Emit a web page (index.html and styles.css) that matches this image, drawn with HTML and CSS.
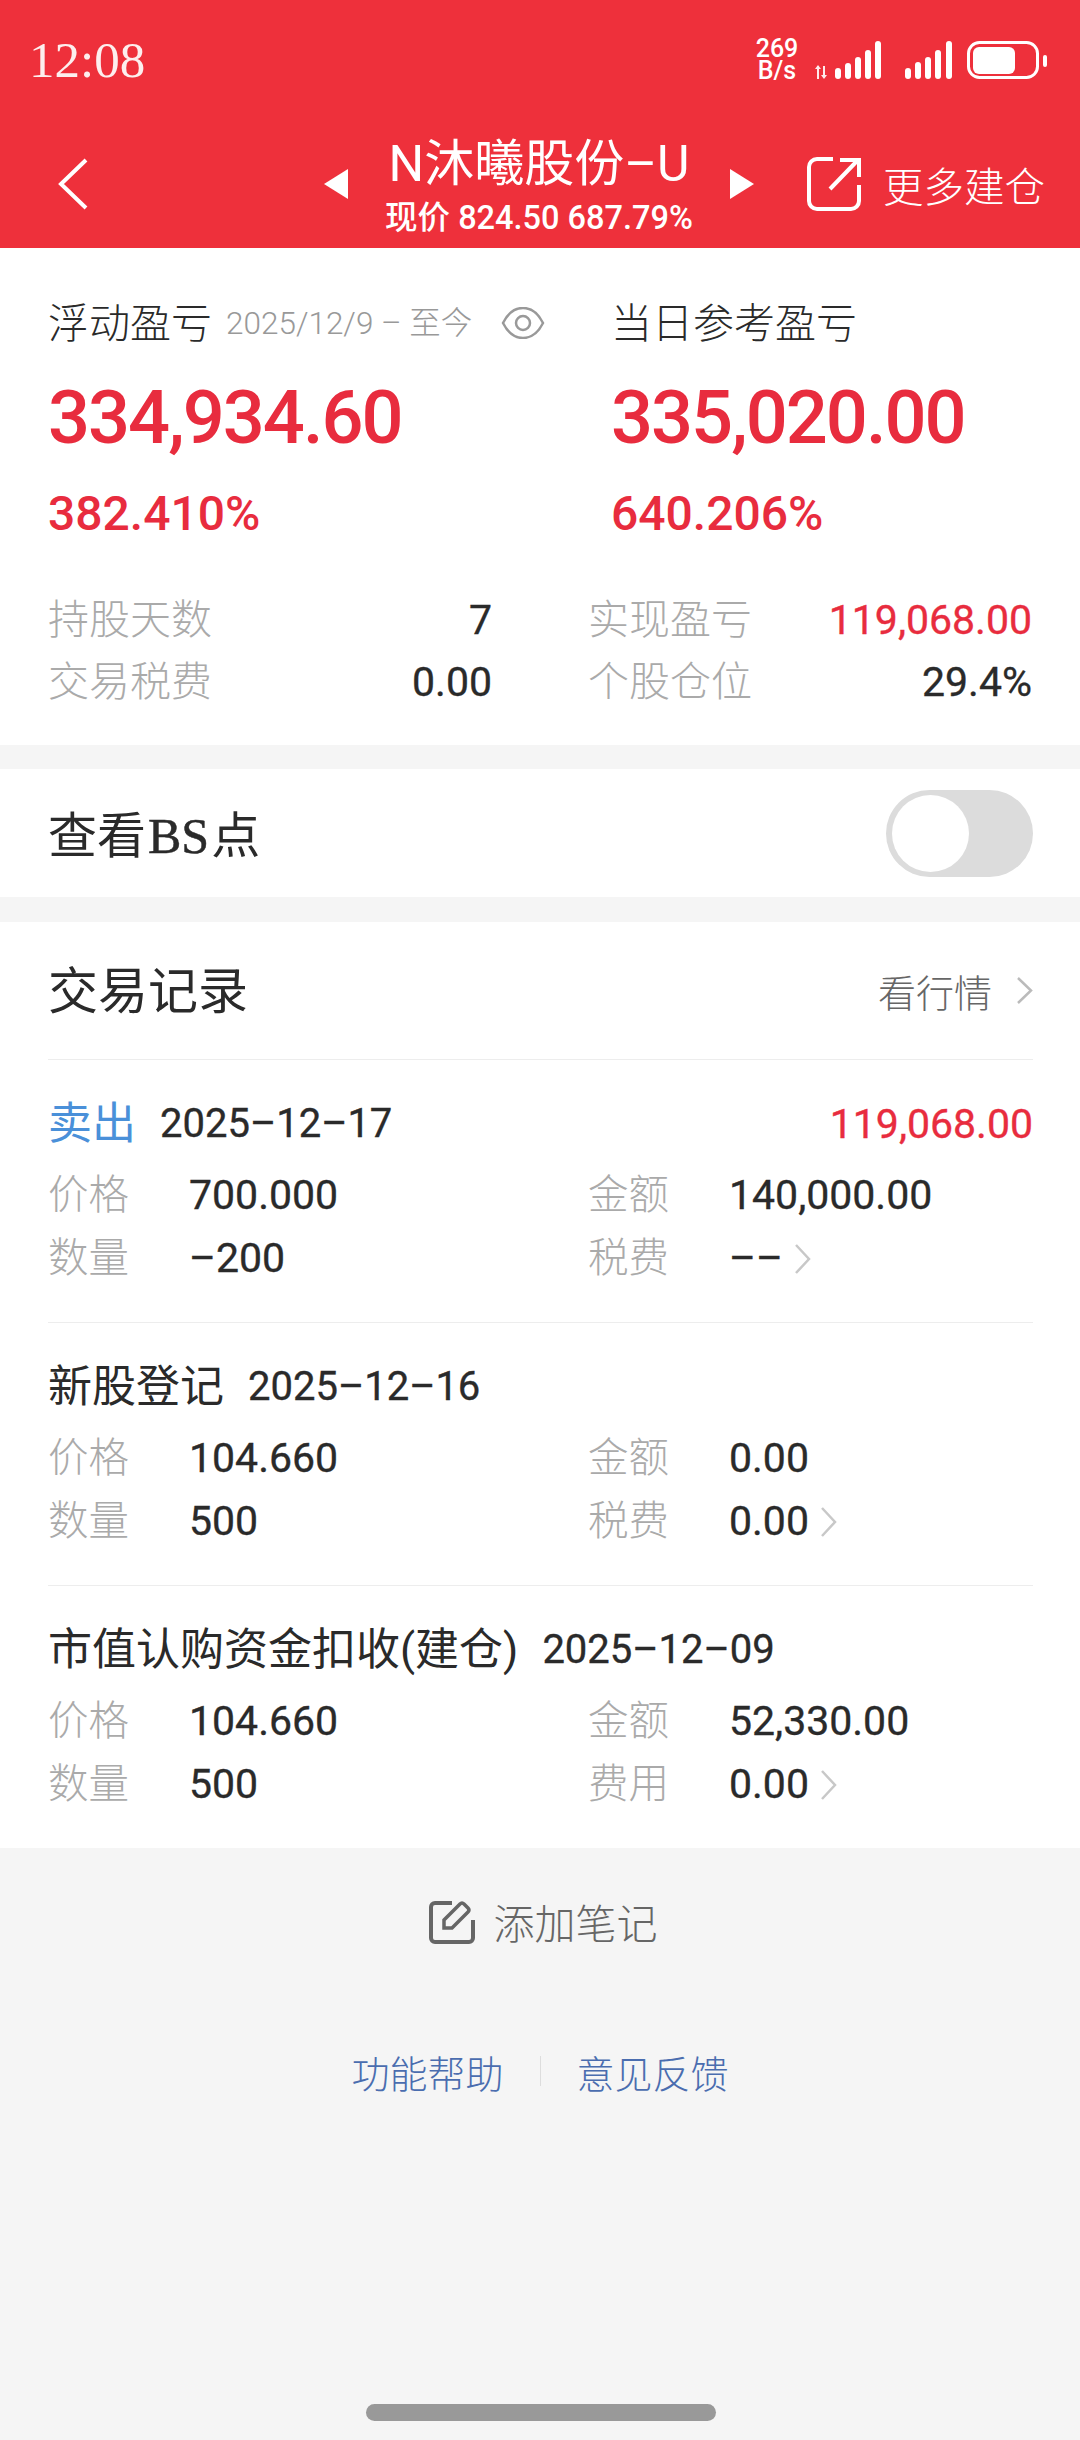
FILE: index.html
```html
<!DOCTYPE html>
<html lang="zh">
<head>
<meta charset="utf-8">
<title>N沐曦股份-U</title>
<link rel="stylesheet" href="styles.css">
</head>
<body>
<div class="page">
  <header class="top">
    <div class="status">
      <span class="clock">12:08</span>
      <div class="status-right">
        <div class="speed">269<br>B/s</div>
        <svg class="sig-a" width="66" height="38" viewBox="0 0 66 38"><g fill="#fff"><path d="M2 25h2v13H2zM0 28l3-4 3 4zM8 25h2v9h2l-3 4-3-4h2z" opacity=".9"/><rect x="20" y="27" width="6" height="11" rx="3"/><rect x="30" y="22" width="6" height="16" rx="3"/><rect x="40" y="16" width="6" height="22" rx="3"/><rect x="50" y="9" width="6" height="29" rx="3"/><rect x="60" y="0" width="6" height="38" rx="3"/></g></svg>
        <svg class="sig-b" width="47" height="38" viewBox="0 0 47 38"><g fill="#fff"><rect x="0" y="27" width="6" height="11" rx="3"/><rect x="10" y="21" width="6" height="17" rx="3"/><rect x="20" y="16" width="6" height="22" rx="3"/><rect x="30" y="9" width="6" height="29" rx="3"/><rect x="41" y="0" width="6" height="38" rx="3"/></g></svg>
        <svg class="battery" width="80" height="38" viewBox="0 0 80 38"><rect x="1.500" y="1.500" width="69" height="35" rx="11" fill="none" stroke="#fff" stroke-width="3"/><rect x="6" y="6" width="42" height="27" rx="6" fill="#fff"/><rect x="76" y="14" width="4" height="12" rx="2" fill="#fff"/></svg>
      </div>
    </div>
    <nav class="nav">
      <svg class="back" width="30" height="52" viewBox="0 0 30 52"><path d="M28 2 3 26l25 24" fill="none" stroke="#fff" stroke-width="4"/></svg>
      <svg class="tri tri-l" width="24" height="30" viewBox="0 0 24 30"><path d="M24 0v30L0 15z" fill="#fff"/></svg>
      <div class="name">
        <div class="name-main">N沐曦股份–U</div>
        <div class="name-sub">现价 824.50 687.79%</div>
      </div>
      <svg class="tri" width="24" height="30" viewBox="0 0 24 30"><path d="M0 0v30l24-15z" fill="#fff"/></svg>
      <svg class="share" width="54" height="54" viewBox="0 0 54 54"><path d="M26 2H10a8 8 0 0 0-8 8v34a8 8 0 0 0 8 8h34a8 8 0 0 0 8-8V28" fill="none" stroke="#fff" stroke-width="4"/><path d="M23 32 50 4M33 3h19v17" fill="none" stroke="#fff" stroke-width="4"/></svg>
      <span class="more">更多建仓</span>
    </nav>
  </header>

  <section class="card summary">
    <div class="pl-grid">
      <div class="pl">
        <div class="pl-label">浮动盈亏<span class="range">2025/12/9 – 至今</span>
          <svg class="eye" width="44" height="32" viewBox="0 0 44 32"><path d="M2 16C12-4 32-4 42 16 32 36 12 36 2 16z" fill="none" stroke="#999" stroke-width="2.500"/><circle cx="22" cy="16" r="7" fill="none" stroke="#999" stroke-width="2.500"/></svg>
        </div>
        <div class="big">334,934.60</div>
        <div class="pct">382.410%</div>
      </div>
      <div class="pl">
        <div class="pl-label">当日参考盈亏</div>
        <div class="big">335,020.00</div>
        <div class="pct">640.206%</div>
      </div>
    </div>
    <div class="stats">
      <div class="stat"><span class="lbl">持股天数</span><span class="val">7</span></div>
      <div class="stat"><span class="lbl">实现盈亏</span><span class="val red">119,068.00</span></div>
      <div class="stat"><span class="lbl">交易税费</span><span class="val">0.00</span></div>
      <div class="stat"><span class="lbl">个股仓位</span><span class="val">29.4%</span></div>
    </div>
  </section>

  <section class="card bs">
    <span class="bs-title">查看<span class="bs-latin">BS</span>点</span>
    <div class="toggle"><div class="knob"></div></div>
  </section>

  <section class="card trades">
    <div class="trades-head">
      <span class="trades-title">交易记录</span>
      <span class="quote">看行情<svg class="chev-lg" width="17" height="29" viewBox="0 0 17 29"><path d="m2 2 13 12.500L2 27" fill="none" stroke="#bbb" stroke-width="2.500"/></svg></span>
    </div>

    <article class="trade">
      <div class="trade-head">
        <span class="t-type blue">卖出</span><span class="t-date">2025–12–17</span>
        <span class="t-amt red">119,068.00</span>
      </div>
      <div class="t-grid">
        <span class="lbl">价格</span><span class="val">700.000</span>
        <span class="lbl">金额</span><span class="val">140,000.00</span>
        <span class="lbl">数量</span><span class="val">–200</span>
        <span class="lbl">税费</span><span class="val">––<svg class="chev" width="17" height="32" viewBox="0 0 17 32"><path d="m2 2 13 14L2 30" fill="none" stroke="#c8c8c8" stroke-width="2.500"/></svg></span>
      </div>
    </article>

    <article class="trade">
      <div class="trade-head">
        <span class="t-type">新股登记</span><span class="t-date">2025–12–16</span>
      </div>
      <div class="t-grid">
        <span class="lbl">价格</span><span class="val">104.660</span>
        <span class="lbl">金额</span><span class="val">0.00</span>
        <span class="lbl">数量</span><span class="val">500</span>
        <span class="lbl">税费</span><span class="val">0.00<svg class="chev" width="17" height="32" viewBox="0 0 17 32"><path d="m2 2 13 14L2 30" fill="none" stroke="#c8c8c8" stroke-width="2.500"/></svg></span>
      </div>
    </article>

    <article class="trade">
      <div class="trade-head">
        <span class="t-type">市值认购资金扣收(建仓)</span><span class="t-date">2025–12–09</span>
      </div>
      <div class="t-grid">
        <span class="lbl">价格</span><span class="val">104.660</span>
        <span class="lbl">金额</span><span class="val">52,330.00</span>
        <span class="lbl">数量</span><span class="val">500</span>
        <span class="lbl">费用</span><span class="val">0.00<svg class="chev" width="17" height="32" viewBox="0 0 17 32"><path d="m2 2 13 14L2 30" fill="none" stroke="#c8c8c8" stroke-width="2.500"/></svg></span>
      </div>
    </article>
  </section>

  <footer class="foot">
    <div class="note">
      <svg width="46" height="45" viewBox="0 0 46 45"><path d="M23 4H6a4 4 0 0 0-4 4v31a4 4 0 0 0 4 4h34a4 4 0 0 0 4-4V21" fill="none" stroke="#666" stroke-width="4"/><path d="M15 29v-8L31 5q2-2 4 0l4 4q2 2 0 4L23 29z" fill="none" stroke="#666" stroke-width="3.500"/></svg>
      <span>添加笔记</span>
    </div>
    <div class="links">
      <span>功能帮助</span><i class="sep"></i><span>意见反馈</span>
    </div>
  </footer>
  <div class="home"></div>
</div>
</body>
</html>
```
FILE: styles.css
```css
* { box-sizing: border-box; }
html, body { margin: 0; padding: 0; }
body {
  width: 1080px;
  height: 2440px;
  background: #f5f5f5;
  font-family: Roboto, "Noto Sans CJK SC", sans-serif;
  color: #2a2a2a;
  overflow: hidden;
}
svg { display: block; flex: none; }
.page { position: relative; height: 2440px; display: flex; flex-direction: column; }
.red { color: #e82c3e; }
.blue { color: #4a90d9; }

/* header */
.top { height: 248px; background: #ee303b; color: #fff; }
.status { height: 120px; display: flex; align-items: center; justify-content: space-between; padding: 0 33px 0 29px; }
.clock { font-family: "Liberation Serif", serif; font-size: 51px; color: #fdeeee; }
.status-right { display: flex; align-items: center; }
.speed { text-align: center; font-size: 25px; line-height: 22px; font-weight: 500; width: 44px; margin-right: 16px; }
.sig-a { margin-right: 24px; }
.sig-b { margin-right: 15px; }
.nav { height: 128px; display: flex; align-items: center; padding-left: 58px; }
.tri-l { margin-left: 236px; }
.name { width: 382px; height: 128px; padding-top: 15px; text-align: center; white-space: nowrap; }
.name-main { font-size: 50px; line-height: 58px; }
.name-sub { font-size: 32.500px; line-height: 40px; margin-top: 5px; font-weight: 500; }
.share { margin-left: 53px; }
.more { margin-left: 22px; font-size: 40.500px; font-weight: 300; white-space: nowrap; }

/* cards */
.card { background: #fff; }
.summary { height: 497px; padding: 48px 48px 0; }
.pl-grid { display: grid; grid-template-columns: 563px 1fr; }
.pl-label { display: flex; align-items: center; height: 56px; font-size: 41px; line-height: 56px; font-weight: 300; white-space: nowrap; }
.range { font-size: 31.500px; color: #999; margin-left: 14px; }
.eye { margin-left: 29px; margin-top: -3px; }
.big { height: 84px; line-height: 84px; margin-top: 24px; font-size: 74px; font-weight: 500; letter-spacing: -2px; color: #e82c3e; }
.pct { height: 60px; line-height: 60px; margin-top: 24px; font-size: 48px; font-weight: 500; color: #e82c3e; }
.stats { display: grid; grid-template-columns: 444px 444px; column-gap: 96px; margin-top: 45px; }
.stat { display: flex; justify-content: space-between; height: 62px; line-height: 62px; }
.lbl { font-size: 41px; font-weight: 300; color: #aaa; white-space: nowrap; }
.t-grid .lbl { font-size: 40.500px; }
.val { font-size: 41px; -webkit-text-stroke: .35px currentColor; color: #2a2a2a; white-space: nowrap; }
.val.red { color: #e82c3e; }

.bs { margin-top: 24px; height: 128px; display: flex; align-items: center; justify-content: space-between; padding: 0 47px 0 48px; }
.bs-title { font-size: 49px; padding-bottom: 4px; }
.bs-latin { font-family: "Liberation Serif", serif; font-size: 50px; margin: 0 2px; -webkit-text-stroke: .5px currentColor; }
.toggle { width: 147px; height: 87px; border-radius: 44px; background: #dcdcdc; padding: 5px 0 0 6px; }
.knob { width: 77px; height: 77px; border-radius: 50%; background: #fff; }

.trades { margin-top: 25px; padding: 0 47px 0 48px; }
.trades-head { height: 137px; display: flex; align-items: center; justify-content: space-between; }
.trades-title { font-size: 50px; padding-bottom: 8px; }
.quote { display: flex; align-items: center; gap: 24px; font-size: 38px; font-weight: 300; color: #666; }
.trade { border-top: 1px solid #ededed; padding: 34px 0 32px; }
.trade-head { display: flex; height: 60px; line-height: 60px; white-space: nowrap; }
.t-type { font-size: 44px; margin-right: 24px; }
.t-date { font-size: 40px; -webkit-text-stroke: .35px currentColor; }
.t-amt { margin-left: auto; font-size: 41px; -webkit-text-stroke: .35px currentColor; }
.t-grid { display: grid; grid-template-columns: 141px 399px 141px 1fr; margin-top: 10px; grid-auto-rows: 63px; line-height: 63px; }
.t-grid .val { display: flex; align-items: center; gap: 11px; }

/* footer */
.foot { flex: 1; display: flex; flex-direction: column; align-items: center; padding-top: 48px; }
.note { display: flex; align-items: center; gap: 19px; height: 50px; margin-left: 6px; font-size: 41px; font-weight: 300; color: #666; }
.links { display: flex; align-items: center; margin-top: 105px; height: 40px; font-size: 38px; font-weight: 300; color: #4a6daf; }
.sep { display: block; width: 1px; height: 30px; background: #ddd; margin: 0 36px; }
.home { position: absolute; left: 366px; top: 2404px; width: 350px; height: 17px; border-radius: 9px; background: #999; }
```
